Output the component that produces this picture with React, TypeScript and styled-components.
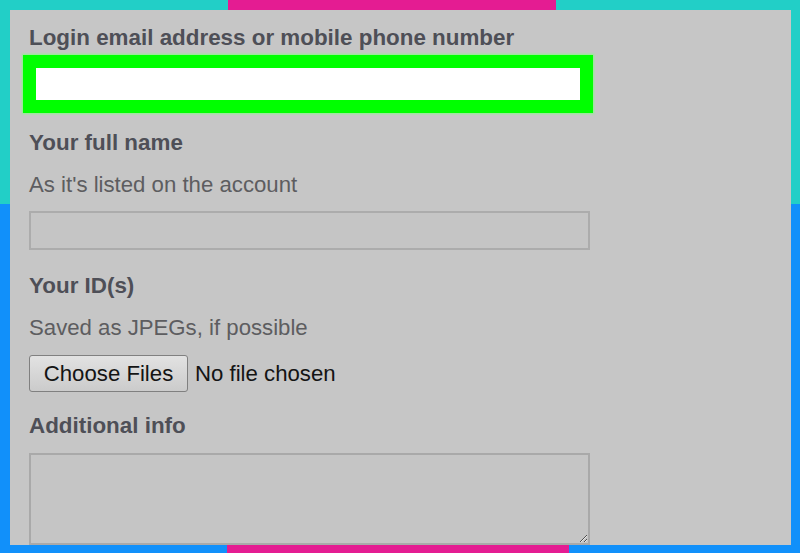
import { FC } from 'react'
import styled, { createGlobalStyle } from 'styled-components'

const GlobalStyle = createGlobalStyle`
    html, body {
        margin: 0;
        padding: 0;
        background: #1190fa;
    }
    * {
        box-sizing: border-box;
    }
`

const Frame = styled.div`
    width: 800px;
    height: 553px;
    padding: 10px 9px 8px 10px;
    background:
        linear-gradient(to right, #22cfc7 0 228px, #e41c92 228px 556px, #22cfc7 556px) top / 100% 10px no-repeat,
        linear-gradient(to right, #1190fa 0 227px, #e41c92 227px 569px, #1190fa 569px) bottom / 100% 8px no-repeat,
        linear-gradient(to bottom, #22cfc7 0 204px, #1190fa 204px);
`

const Panel = styled.div`
    height: 100%;
    background: #c6c6c6;
    padding: 16px 0 0 19px;
    display: flex;
    flex-direction: column;
    align-items: flex-start;
    overflow: hidden;
    font-family: "Liberation Sans", Arial, sans-serif;
`

const Label = styled.div<{ $mt?: number }>`
    margin-top: ${p => p.$mt ?? 0}px;
    font-size: 22.4px;
    line-height: 24px;
    font-weight: 700;
    color: #4e4f57;
`

const Hint = styled.div<{ $mt?: number }>`
    margin-top: ${p => p.$mt ?? 0}px;
    font-size: 22.2px;
    line-height: 24px;
    color: #5d5d60;
`

const Highlight = styled.div`
    margin-top: 5px;
    margin-left: -6px;
    width: 570px;
    height: 58px;
    border: 13px solid #00ff00;
    background: #ffffff;
    box-shadow: 0 0 2px 1px #8cf58c;
`

const TextInput = styled.div`
    margin-top: 14px;
    width: 561px;
    height: 39px;
    border: 2px solid #acacac;
    background: #c5c5c5;
`

const FileRow = styled.div`
    margin-top: 15px;
    display: flex;
    align-items: center;
    gap: 7px;
    font-size: 22.2px;
    color: #141414;
`

const FileButton = styled.button`
    height: 37px;
    width: 159px;
    padding: 0;
    border: 1px solid #808080;
    border-radius: 3px;
    background: linear-gradient(to bottom, #e2e2e2, #cbcbcb);
    font-family: "Liberation Sans", Arial, sans-serif;
    font-size: 22.2px;
    color: #141414;
`

const TextArea = styled.textarea`
    margin-top: 15px;
    width: 561px;
    height: 92px;
    border: 2px solid #a9a9a9;
    background: #c5c5c5;
    resize: both;
    font-family: "Liberation Sans", Arial, sans-serif;
    outline: none;
`

const App: FC = () => {
    return (
        <>
            <GlobalStyle />
            <Frame>
                <Panel>
                    <Label>Login email address or mobile phone number</Label>
                    <Highlight />

                    <Label $mt={18}>Your full name</Label>
                    <Hint $mt={18}>As it's listed on the account</Hint>
                    <TextInput />

                    <Label $mt={24}>Your ID(s)</Label>
                    <Hint $mt={18}>Saved as JPEGs, if possible</Hint>
                    <FileRow>
                        <FileButton>Choose Files</FileButton>
                        <span>No file chosen</span>
                    </FileRow>

                    <Label $mt={22}>Additional info</Label>
                    <TextArea />
                </Panel>
            </Frame>
        </>
    )
}

export default App
